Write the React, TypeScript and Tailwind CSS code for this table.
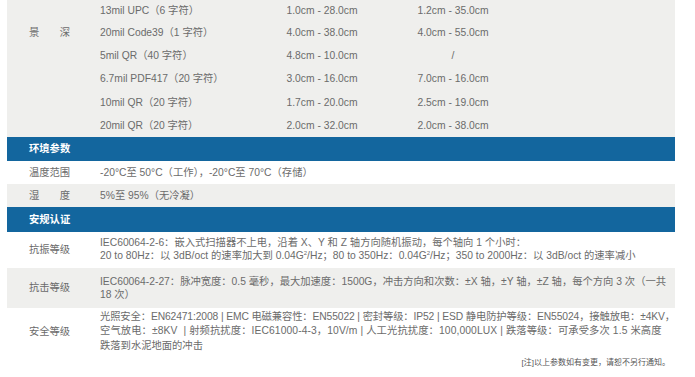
const depthRows = [
  { code: "13mil UPC（6 字符）", a: "1.0cm - 28.0cm", b: "1.2cm - 35.0cm", h: "h-[21px]" },
  { code: "20mil Code39（1 字符）", a: "4.0cm - 38.0cm", b: "4.0cm - 55.0cm", h: "h-[23px]", label: "景\u3000\u3000深" },
  { code: "5mil QR（40 字符）", a: "4.8cm - 10.0cm", b: "/", h: "h-[23px]" },
  { code: "6.7mil PDF417（20 字符）", a: "3.0cm - 16.0cm", b: "7.0cm - 16.0cm", h: "h-[24px]" },
  { code: "10mil QR（20 字符）", a: "1.7cm - 20.0cm", b: "2.5cm - 19.0cm", h: "h-[23px]" },
  { code: "20mil QR（20 字符）", a: "2.0cm - 32.0cm", b: "2.0cm - 38.0cm", h: "h-[23px]" },
];

const Sq = () => <span className="relative -top-[4px] text-[6px]">2</span>;

const SectionHeader = ({ title, h }: { title: string; h: string }) => (
  <div className={`flex items-center bg-[#13669e] pl-[22px] ${h}`}>
    <span className="text-[10.3px] font-bold text-white">{title}</span>
  </div>
);

const Label = ({ children }: { children: React.ReactNode }) => (
  <div className="w-[85px] shrink-0 text-center">{children}</div>
);

export default function App() {
  return (
    <div
      className="min-h-[377px] w-[695px] bg-white text-[10.3px] leading-[13.5px] text-[#6b6b6b]"
      style={{ fontFamily: '"Liberation Sans", "Noto Sans CJK SC", sans-serif' }}
    >
      <div className="ml-[7px] w-[668px]">
        {/* 景深 */}
        <div className="bg-[#efefed]">
          {depthRows.map((r) => (
            <div key={r.code} className={`flex items-center ${r.h}`}>
              <Label>{r.label ?? ""}</Label>
              <div className="ml-[8px] w-[157px] whitespace-nowrap">{r.code}</div>
              <div className="w-[130px] text-center whitespace-nowrap">{r.a}</div>
              <div className="w-[132px] text-center whitespace-nowrap">{r.b}</div>
            </div>
          ))}
        </div>

        <SectionHeader title="环境参数" h="h-[24px]" />
        <div className="flex h-[23px] items-center bg-white">
          <Label>温度范围</Label>
          <div className="ml-[8px] whitespace-nowrap">-20°C至 50°C（工作），-20°C至 70°C（存储）</div>
        </div>
        <div className="flex h-[23px] items-center bg-[#efefed]">
          <Label>湿{"\u3000\u3000"}度</Label>
          <div className="ml-[8px] whitespace-nowrap">5%至 95%（无冷凝）</div>
        </div>

        <SectionHeader title="安规认证" h="h-[25px]" />
        <div className="flex h-[36px] items-center bg-white">
          <Label>抗振等级</Label>
          <div className="ml-[8px] whitespace-nowrap">
            <div>IEC60064-2-6：嵌入式扫描器不上电，沿着 X、Y 和 Z 轴方向随机振动，每个轴向 1 个小时：</div>
            <div>
              20 to 80Hz：以 3dB/oct 的速率加大到 0.04G<Sq />/Hz；80 to 350Hz：0.04G<Sq />/Hz；350 to 2000Hz：以 3dB/oct 的速率减小
            </div>
          </div>
        </div>
        <div className="flex h-[40px] items-center bg-[#efefed]">
          <Label>抗击等级</Label>
          <div className="ml-[8px] whitespace-nowrap">
            <div>IEC60064-2-27：脉冲宽度：0.5 毫秒，最大加速度：1500G，冲击方向和次数：±X 轴，±Y 轴，±Z 轴，每个方向 3 次（一共</div>
            <div>18 次）</div>
          </div>
        </div>
        <div className="flex h-[47px] items-center bg-white">
          <Label>安全等级</Label>
          <div className="ml-[8px] whitespace-nowrap leading-[14.5px]">
            <div className="tracking-[-0.12px]">光照安全：EN62471:2008 | EMC 电磁兼容性：EN55022 | 密封等级：IP52 | ESD 静电防护等级：EN55024，接触放电：±4KV，</div>
            <div className="tracking-[0.1px]">空气放电：±8KV&nbsp; | 射频抗扰度：IEC61000-4-3，10V/m | 人工光抗扰度：100,000LUX | 跌落等级：可承受多次 1.5 米高度</div>
            <div>跌落到水泥地面的冲击</div>
          </div>
        </div>

        <div className="mt-[2px] pr-[5px] text-right text-[8px] leading-[12px] text-[#555]">
          [注]以上参数如有变更，请恕不另行通知。
        </div>
      </div>
    </div>
  );
}
